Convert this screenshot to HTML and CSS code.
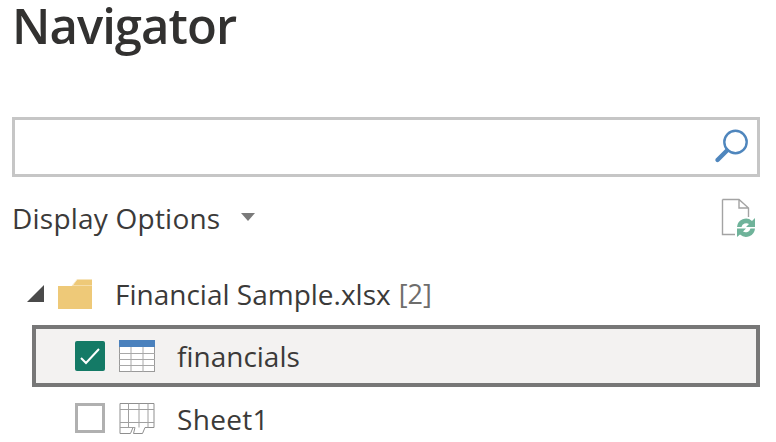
FILE: index.html
```html
<!DOCTYPE html>
<html lang="en">
<head>
<meta charset="utf-8">
<title>Navigator</title>
<link rel="stylesheet" href="styles.css">
</head>
<body>
<main class="nav">
  <h1 class="title">Navigator</h1>
  <div class="search">
    <svg class="search-icon" width="36" height="36" viewBox="0 0 36 36"><circle cx="21.5" cy="13" r="11.2" fill="none" stroke="#4f86bd" stroke-width="2.4"/><path d="M13 21.5 L3.5 31" stroke="#4f86bd" stroke-width="4.4" stroke-linecap="round"/></svg>
  </div>
  <div class="options">
    <span class="options-label">Display Options</span>
    <span class="caret"></span>
    <svg class="refresh" width="36" height="40" viewBox="0 0 36 40"><path d="M3.5 1.5H20L29.5 10V19M3.5 1.5V36.5H16M20 1.5V10H29.5" fill="none" stroke="#a3a3a3" stroke-width="1.4"/><path d="M18 29 A9 9 0 0 1 33 23 L36 20 V29 H27 L30 26 A5 5 0 0 0 22.5 29 Z" fill="#6fb39a"/><path d="M36 30.5 A9 9 0 0 1 21 36.5 L18 39 V30.5 H27 L24 33.5 A5 5 0 0 0 31.5 30.5 Z" fill="#6fb39a"/></svg>
  </div>
  <div class="tree">
    <div class="file-row">
      <span class="expander"></span>
      <svg class="folder" width="36" height="32" viewBox="0 0 36 32"><path d="M1 8 H15 L20 1.5 H35 V31 H1 Z" fill="#eec978"/><path d="M15 8 L20 1.5" stroke="#f9ecd0" stroke-width="1" /><path d="M15.5 7.5 H35" stroke="#f5dda9" stroke-width="1"/></svg>
      <span class="file-name">Financial Sample.xlsx</span>
      <span class="count">[2]</span>
    </div>
    <div class="item item-selected">
      <span class="check check-on"><svg width="30" height="30" viewBox="0 0 30 30"><path d="M6 17 L11 22 L24 8" fill="none" stroke="#fff" stroke-width="2"/></svg></span>
      <svg class="grid-icon" width="36" height="32" viewBox="0 0 36 32"><rect x="0.5" y="0.5" width="35" height="31" fill="#fff" stroke="#9a9a9a"/><rect x="0" y="0" width="36" height="7" fill="#4a81bd"/><path d="M0 13.5H36M0 19.5H36M0 25.5H36M12 7V32M24 7V32" stroke="#a8a8a8" stroke-width="1"/></svg>
      <span class="item-name">financials</span>
    </div>
    <div class="item">
      <span class="check"></span>
      <svg class="grid-icon" width="36" height="34" viewBox="0 0 36 34"><path d="M1 2.5H35V26.5H26L23.5 32.5H14.5L16 26.5H14L11.5 32.5H1Z" fill="#fff" stroke="#8f8f8f" stroke-width="1"/><path d="M1 8.5H35M1 21.5H35M1 26.5H16M9.5 2.5V26.5M20 2.5V26.5M29 2.5V26.5" stroke="#a0a0a0" stroke-width="1"/></svg>
      <span class="item-name sheet-name">Sheet1</span>
    </div>
  </div>
</main>
</body>
</html>
```

FILE: styles.css
```css
* { box-sizing: border-box; }
html, body { margin: 0; height: 442px; overflow: hidden; background: #fff; }
body { font-family: "Open Sans", "Noto Sans", "Liberation Sans", sans-serif; color: #3b3a39; }
.nav { padding: 0 16px 0 12px; }
.title {
  margin: 0;
  height: 117px;
  font-size: 49px;
  line-height: 50px;
  letter-spacing: -0.95px;
  font-weight: 600;
  color: #323130;
}
.search {
  height: 60px;
  border: 3px solid #c6c6c6;
  display: flex;
  align-items: center;
  justify-content: flex-end;
  padding-right: 7px;
}
.options {
  height: 85px;
  display: flex;
  align-items: center;
  padding-bottom: 3px;
  font-size: 28px;
}
.options-label { line-height: 36px; letter-spacing: 0.22px; }
.caret {
  width: 0;
  height: 0;
  margin-left: 21px;
  border-left: 7.5px solid transparent;
  border-right: 7.5px solid transparent;
  border-top: 8px solid #7a7a7a;
  margin-top: -2px;
}
.refresh { margin-left: auto; margin-right: 5px; }
.tree { padding-left: 15px; }
.file-row {
  height: 63px;
  display: flex;
  align-items: center;
  font-size: 28px;
}
.expander {
  width: 0;
  height: 0;
  border-left: 17px solid transparent;
  border-bottom: 17px solid #4a4a4a;
  margin-right: 13px;
}
.folder { margin-right: 22px; }
.count { margin-left: 8px; color: #6e6d6c; font-size: 27px; }
.item {
  margin-left: 5px;
  height: 62px;
  display: flex;
  align-items: center;
  padding-left: 43px;
  font-size: 28px;
}
.item-selected {
  background: #f3f2f1;
  border: 4px solid #777;
  padding-left: 39px;
}
.check {
  width: 30px;
  height: 30px;
  border: 3px solid #b0b0b0;
  background: #fff;
  display: flex;
  align-items: center;
  justify-content: center;
  margin-right: 14px;
  flex: none;
}
.check-on { background: #147a66; border: 0; border-radius: 2px; }
.grid-icon { margin-right: 22px; }
.sheet-name { letter-spacing: 0.3px; padding-top: 2px; }
```
